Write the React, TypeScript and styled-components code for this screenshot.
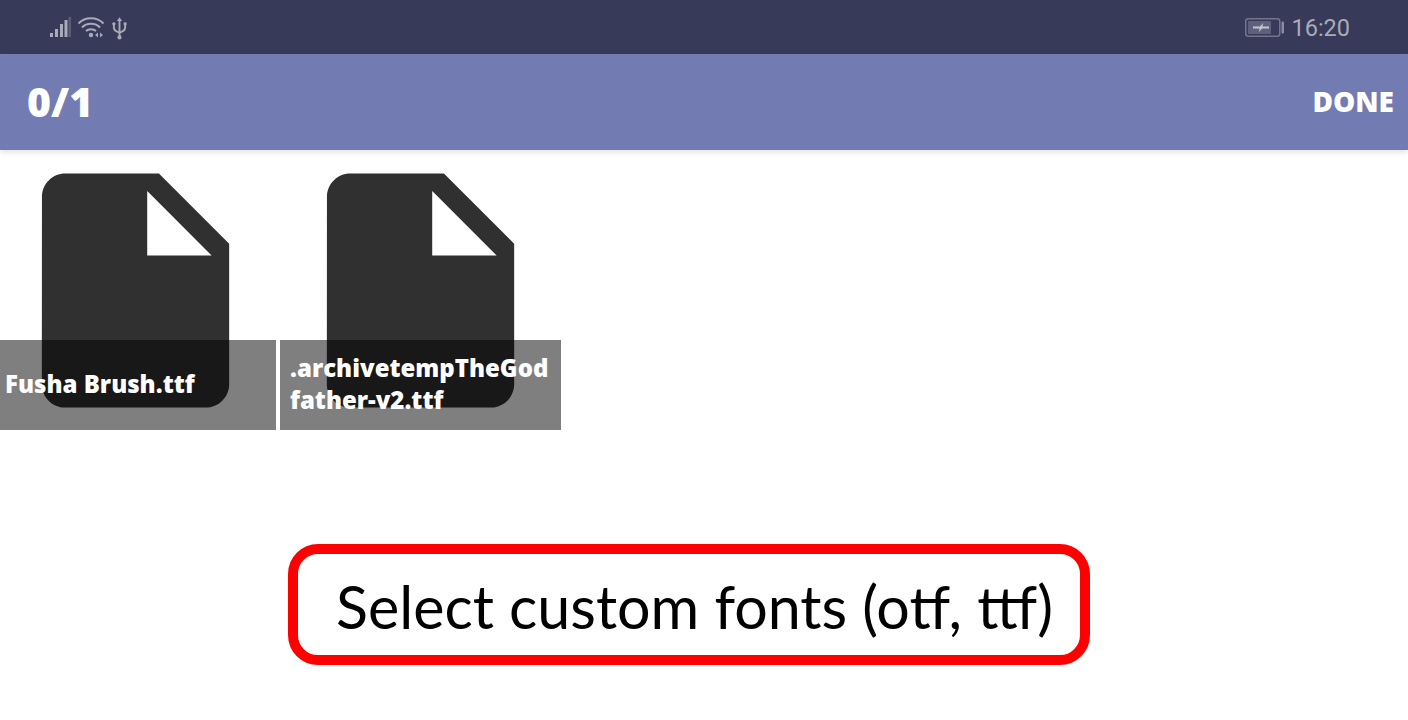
import React from 'react';
import styled, { createGlobalStyle } from 'styled-components';

const FILES = ['Fusha Brush.ttf', '.archivetempTheGodfather-v2.ttf'];

const GlobalStyle = createGlobalStyle`
  html, body {
    margin: 0;
    padding: 0;
    background: #ffffff;
    overflow: hidden;
  }
`;

const App: React.FC = () => {
  return (
    <Page>
      <GlobalStyle />
      <StatusBar>
        <StatusGroup>
          <SignalIcon />
          <WifiIcon />
          <UsbIcon />
        </StatusGroup>
        <StatusGroup>
          <BatteryIcon />
          <Clock>16:20</Clock>
        </StatusGroup>
      </StatusBar>
      <AppBar>
        <Counter>0/1</Counter>
        <DoneBtn>DONE</DoneBtn>
      </AppBar>
      <FileGrid>
        {FILES.map(name => (
          <FileCell key={name}>
            <FileIcon />
            <Caption>{name}</Caption>
          </FileCell>
        ))}
      </FileGrid>
      <Callout>Select custom fonts (otf, ttf)</Callout>
    </Page>
  );
};

export default App;

const SignalIcon = () => (
  <svg width="22" height="22" viewBox="0 0 22 22" fill="#a9abb9">
    <rect x="0" y="16" width="3" height="4" />
    <rect x="5" y="12" width="3" height="8" />
    <rect x="10" y="7" width="3" height="13" />
    <rect x="14.500" y="3" width="3" height="17" />
    <rect x="18.500" y="0" width="2.500" height="20" fill="#5c5e78" />
  </svg>
);

const WifiIcon = () => (
  <svg width="28" height="22" viewBox="0 0 28 22" fill="none" stroke="#a9abb9" strokeWidth="2">
    <path d="M0.500 6.500C7 -0.500 19 -0.500 25.500 6.500" />
    <path d="M4 10.500C8.500 5.500 17.500 5.500 22 10.500" />
    <path d="M8 14C10.500 11.500 15.500 11.500 18 14" />
    <circle cx="13" cy="18" r="2.200" fill="#a9abb9" stroke="none" />
    <path d="M20 15.500l-3 2.500 3 2.500zM22 15.500l3 2.500-3 2.500z" fill="#a9abb9" stroke="none" />
  </svg>
);

const UsbIcon = () => (
  <svg width="15" height="23" viewBox="0 0 16 24" fill="none" stroke="#a9abb9" strokeWidth="2">
    <path d="M8 3v18" />
    <path d="M2 8v3c0 2.500 1.500 3.500 3 4l3 1.500 3-1.500c1.500-.5 3-1.500 3-4V8" />
    <path d="M8 0l2.800 4H5.200z" fill="#a9abb9" stroke="none" />
    <circle cx="8" cy="21.500" r="2.200" fill="#a9abb9" stroke="none" />
    <circle cx="2" cy="7" r="1.800" fill="#a9abb9" stroke="none" />
    <rect x="12.500" y="5.500" width="3" height="3" fill="#a9abb9" stroke="none" />
  </svg>
);

const BatteryIcon = () => (
  <svg width="40" height="20" viewBox="0 0 40 20">
    <rect x="0.750" y="0.750" width="34" height="17.500" rx="2.500" fill="none" stroke="#73758c" strokeWidth="1.500" />
    <rect x="3" y="3" width="23" height="13" rx="1" fill="#5f617c" />
    <path d="M8 8.500h7l3-3.500-.5 3.500H24v2h-7l-3 3.500.5-3.500H8z" fill="#c4c5cf" />
    <rect x="36.500" y="3.500" width="2.500" height="12" rx="1" fill="#8a8ca0" />
  </svg>
);

const FileIcon = () => (
  <FileSvg viewBox="0 0 24 24">
    <path d="M6 2c-1.100 0-1.990.9-1.990 2L4 20c0 1.100.89 2 1.990 2H18c1.100 0 2-.9 2-2V8l-6-6H6zm7 7V3.500L18.500 9H13z" />
  </FileSvg>
);

const Page = styled.div`
  display: flex;
  flex-direction: column;
  width: 1408px;
  height: 720px;
  overflow: hidden;
  background: #ffffff;
`;

const StatusBar = styled.div`
  display: flex;
  align-items: center;
  justify-content: space-between;
  box-sizing: border-box;
  height: 54px;
  padding: 2px 58px 0 50px;
  background: #383a59;
`;

const StatusGroup = styled.div`
  display: flex;
  align-items: center;
  gap: 6px;
`;

const Clock = styled.span`
  font-family: Roboto, sans-serif;
  font-size: 23.500px;
  color: #a9abb9;
`;

const AppBar = styled.div`
  display: flex;
  align-items: center;
  justify-content: space-between;
  box-sizing: border-box;
  height: 96px;
  padding: 0 14px 2px 27px;
  background: #737bb3;
  box-shadow: 0 2px 6px rgba(0, 0, 0, 0.12);
  position: relative;
  z-index: 1;
`;

const Counter = styled.span`
  font-family: 'Open Sans', sans-serif;
  font-weight: 800;
  font-size: 41px;
  color: #ffffff;
`;

const DoneBtn = styled.span`
  font-family: 'Open Sans', sans-serif;
  font-weight: 800;
  font-size: 28px;
  color: #ffffff;
`;

const FileGrid = styled.div`
  display: grid;
  grid-template-columns: repeat(2, 281px);
  gap: 4px;
  margin-left: -5px;
`;

const FileCell = styled.div`
  position: relative;
  height: 280px;
`;

const FileSvg = styled.svg`
  display: block;
  width: 281px;
  height: 281px;
  fill: #303030;
`;

const Caption = styled.div`
  position: absolute;
  left: 0;
  right: 0;
  bottom: 0;
  height: 90px;
  display: flex;
  align-items: center;
  box-sizing: border-box;
  padding: 0 10px 2px;
  background: rgba(0, 0, 0, 0.5);
  font-family: 'Open Sans', sans-serif;
  font-weight: 800;
  font-size: 24px;
  line-height: 32px;
  color: #ffffff;
  word-break: break-all;
`;

const Callout = styled.div`
  box-sizing: border-box;
  width: 802px;
  height: 121px;
  margin: 114px 0 0 288px;
  padding: 3px 0 0 38px;
  display: flex;
  align-items: center;
  border: 10px solid #ff0000;
  border-radius: 30px;
  font-family: Lato, sans-serif;
  font-size: 59.200px;
  color: #000000;
`;
